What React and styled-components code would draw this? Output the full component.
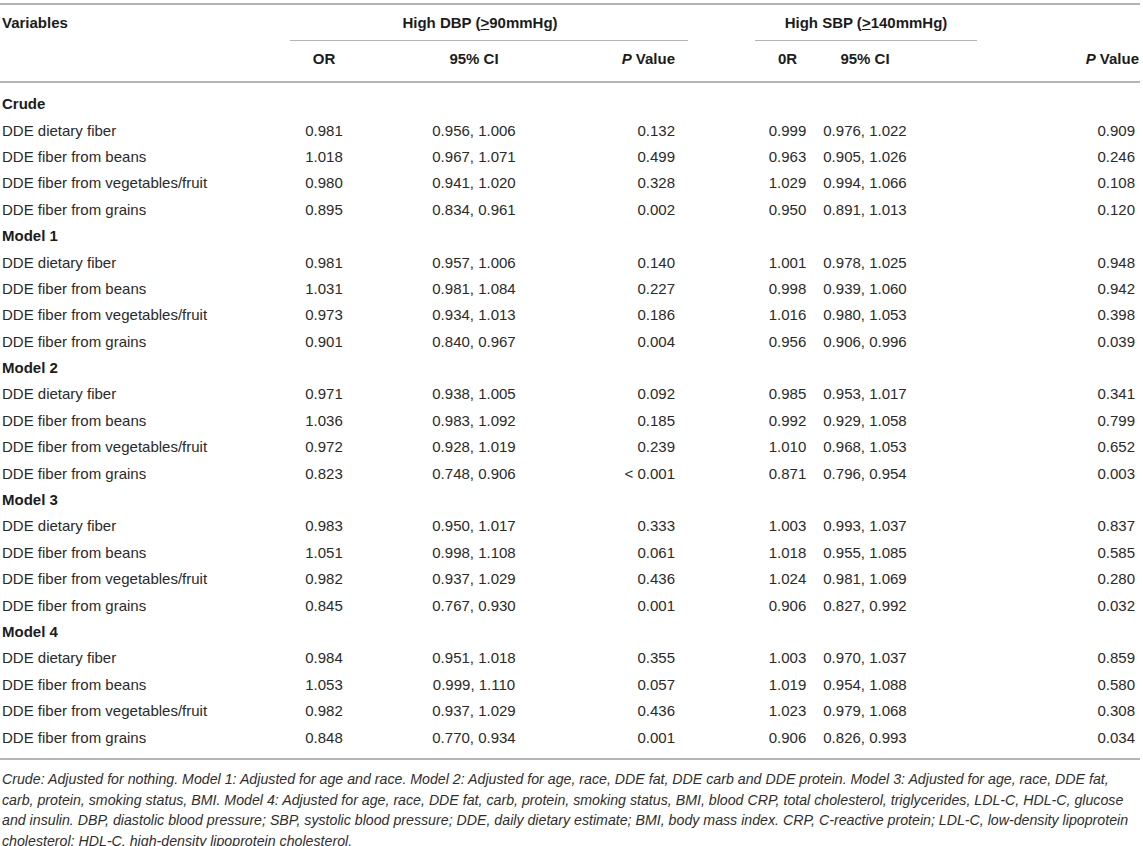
import React from "react";
import styled, { createGlobalStyle, css } from "styled-components";

const Global = createGlobalStyle`
  html, body { margin: 0; padding: 0; background: #fff; }
  body { font-family: "Liberation Sans", Arial, Helvetica, sans-serif; color: #2a2a2a; }
`;

const COLS = "290px 68px 232px 98px 67px 65px 90px 67px 163px";
const RULE = "#b4b4b4";

const Page = styled.div`
  width: 1143px;
  padding-top: 3px;
`;

const Table = styled.div`
  width: 1140px;
  border-top: 2px solid ${RULE};
`;

const Row = styled.div`
  display: grid;
  grid-template-columns: ${COLS};
  height: ${(p) => p.$h || 26.4}px;
  align-items: stretch;
  font-size: 15px;
  line-height: 18px;
`;

const HeadBlock = styled.div`
  border-bottom: 2px solid ${RULE};
`;

const Body = styled.div`
  padding: 8px 0 7px;
  border-bottom: 2px solid ${RULE};
`;

const Cell = styled.div`
  display: flex;
  align-items: center;
  white-space: nowrap;
  grid-column: ${(p) => p.$col};
  justify-content: ${(p) =>
    p.$align === "right" ? "flex-end" : p.$align === "left" ? "flex-start" : "center"};
  padding-left: ${(p) => (p.$align === "left" ? 2 : 0)}px;
  padding-right: ${(p) => p.$pr || 0}px;
  padding-bottom: ${(p) => p.$pb || 0}px;
  ${(p) =>
    p.$bold &&
    css`
      font-weight: bold;
      color: #1c1c1c;
    `}
`;

const GroupCell = styled(Cell)`
  border-bottom: 1.5px solid ${RULE};
`;

const Ge = styled.span`
  text-decoration: underline;
  text-underline-offset: 1px;
`;

const Ital = styled.i`
  font-style: italic;
`;

const Note = styled.p`
  margin: 9px 0 0;
  padding-left: 2px;
  font-size: 14.2px;
  line-height: 20.8px;
  font-style: italic;
  color: #2e2e2e;
  white-space: nowrap;
`;

const groups = [
  {
    name: "Crude",
    rows: [
      ["DDE dietary fiber", "0.981", "0.956, 1.006", "0.132", "0.999", "0.976, 1.022", "0.909"],
      ["DDE fiber from beans", "1.018", "0.967, 1.071", "0.499", "0.963", "0.905, 1.026", "0.246"],
      ["DDE fiber from vegetables/fruit", "0.980", "0.941, 1.020", "0.328", "1.029", "0.994, 1.066", "0.108"],
      ["DDE fiber from grains", "0.895", "0.834, 0.961", "0.002", "0.950", "0.891, 1.013", "0.120"],
    ],
  },
  {
    name: "Model 1",
    rows: [
      ["DDE dietary fiber", "0.981", "0.957, 1.006", "0.140", "1.001", "0.978, 1.025", "0.948"],
      ["DDE fiber from beans", "1.031", "0.981, 1.084", "0.227", "0.998", "0.939, 1.060", "0.942"],
      ["DDE fiber from vegetables/fruit", "0.973", "0.934, 1.013", "0.186", "1.016", "0.980, 1.053", "0.398"],
      ["DDE fiber from grains", "0.901", "0.840, 0.967", "0.004", "0.956", "0.906, 0.996", "0.039"],
    ],
  },
  {
    name: "Model 2",
    rows: [
      ["DDE dietary fiber", "0.971", "0.938, 1.005", "0.092", "0.985", "0.953, 1.017", "0.341"],
      ["DDE fiber from beans", "1.036", "0.983, 1.092", "0.185", "0.992", "0.929, 1.058", "0.799"],
      ["DDE fiber from vegetables/fruit", "0.972", "0.928, 1.019", "0.239", "1.010", "0.968, 1.053", "0.652"],
      ["DDE fiber from grains", "0.823", "0.748, 0.906", "< 0.001", "0.871", "0.796, 0.954", "0.003"],
    ],
  },
  {
    name: "Model 3",
    rows: [
      ["DDE dietary fiber", "0.983", "0.950, 1.017", "0.333", "1.003", "0.993, 1.037", "0.837"],
      ["DDE fiber from beans", "1.051", "0.998, 1.108", "0.061", "1.018", "0.955, 1.085", "0.585"],
      ["DDE fiber from vegetables/fruit", "0.982", "0.937, 1.029", "0.436", "1.024", "0.981, 1.069", "0.280"],
      ["DDE fiber from grains", "0.845", "0.767, 0.930", "0.001", "0.906", "0.827, 0.992", "0.032"],
    ],
  },
  {
    name: "Model 4",
    rows: [
      ["DDE dietary fiber", "0.984", "0.951, 1.018", "0.355", "1.003", "0.970, 1.037", "0.859"],
      ["DDE fiber from beans", "1.053", "0.999, 1.110", "0.057", "1.019", "0.954, 1.088", "0.580"],
      ["DDE fiber from vegetables/fruit", "0.982", "0.937, 1.029", "0.436", "1.023", "0.979, 1.068", "0.308"],
      ["DDE fiber from grains", "0.848", "0.770, 0.934", "0.001", "0.906", "0.826, 0.993", "0.034"],
    ],
  },
];

function DataRow({ r }) {
  return (
    <Row>
      <Cell $col="1" $align="left">{r[0]}</Cell>
      <Cell $col="2">{r[1]}</Cell>
      <Cell $col="3">{r[2]}</Cell>
      <Cell $col="4" $align="right" $pr={13}>{r[3]}</Cell>
      <Cell $col="6">{r[4]}</Cell>
      <Cell $col="7">{r[5]}</Cell>
      <Cell $col="9" $align="right" $pr={5}>{r[6]}</Cell>
    </Row>
  );
}

export default function App() {
  return (
    <Page>
      <Global />
      <Table>
        <HeadBlock>
          <Row $h={36}>
            <Cell $col="1" $align="left" $bold>Variables</Cell>
            <GroupCell $col="2 / 5" $bold $pr={18}>
              High DBP (<Ge>&gt;</Ge>90mmHg)
            </GroupCell>
            <GroupCell $col="6 / 9" $bold>
              High SBP (<Ge>&gt;</Ge>140mmHg)
            </GroupCell>
          </Row>
          <Row $h={40}>
            <Cell $col="2" $bold $pb={4}>OR</Cell>
            <Cell $col="3" $bold $pb={4}>95% CI</Cell>
            <Cell $col="4" $align="right" $pr={13} $bold $pb={4}>
              <Ital>P</Ital>&nbsp;Value
            </Cell>
            <Cell $col="6" $bold $pb={4}>0R</Cell>
            <Cell $col="7" $bold $pb={4}>95% CI</Cell>
            <Cell $col="9" $align="right" $pr={1} $bold $pb={4}>
              <Ital>P</Ital>&nbsp;Value
            </Cell>
          </Row>
        </HeadBlock>
        <Body>
          {groups.map((g) => (
            <React.Fragment key={g.name}>
              <Row>
                <Cell $col="1" $align="left" $bold>{g.name}</Cell>
              </Row>
              {g.rows.map((r) => (
                <DataRow key={g.name + r[0]} r={r} />
              ))}
            </React.Fragment>
          ))}
        </Body>
      </Table>
      <Note>
        Crude: Adjusted for nothing. Model 1: Adjusted for age and race. Model 2: Adjusted for age, race, DDE fat, DDE carb and DDE protein. Model 3: Adjusted for age, race, DDE fat,
        <br />
        carb, protein, smoking status, BMI. Model 4: Adjusted for age, race, DDE fat, carb, protein, smoking status, BMI, blood CRP, total cholesterol, triglycerides, LDL-C, HDL-C, glucose
        <br />
        and insulin. DBP, diastolic blood pressure; SBP, systolic blood pressure; DDE, daily dietary estimate; BMI, body mass index. CRP, C-reactive protein; LDL-C, low-density lipoprotein
        <br />
        cholesterol; HDL-C, high-density lipoprotein cholesterol.
      </Note>
    </Page>
  );
}
